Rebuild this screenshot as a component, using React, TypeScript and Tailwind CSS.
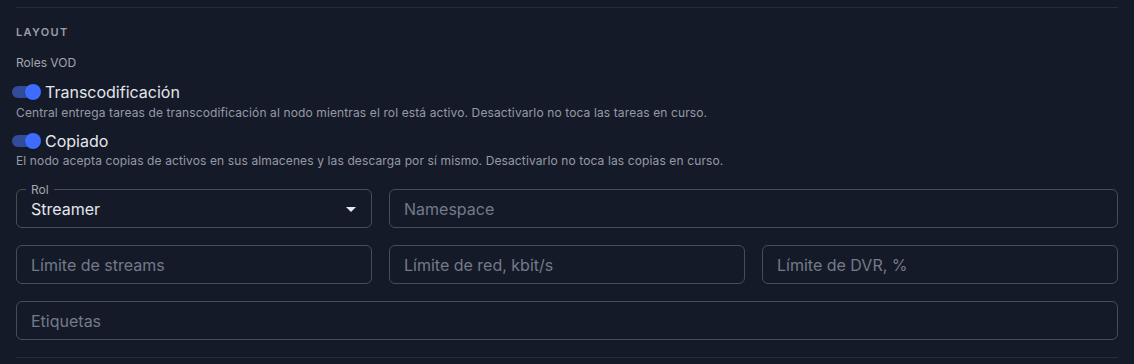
function Toggle({ label }: { label: string }) {
  return (
    <div className="flex items-center h-6">
      <div className="relative w-[34px] h-6 ml-[10px] mr-[1px] shrink-0">
        <span className="absolute left-[2px] top-[6px] w-[28px] h-[12px] rounded-full bg-[#324c9c]" />
        <span className="absolute left-[15px] top-[4px] w-[16px] h-[16px] rounded-full bg-[#3d6cff] shadow" />
      </div>
      <span className="text-[16px] text-[#e4e6eb]">{label}</span>
    </div>
  )
}

function Field({ placeholder }: { placeholder: string }) {
  return (
    <div className="h-[39px] flex items-center pt-px px-[14px] rounded-md border border-[#474c59] text-[16px] text-[#737a89]">
      {placeholder}
    </div>
  )
}

export default function App() {
  return (
    <div className="w-[1134px] h-[364px] bg-[#151a28] overflow-hidden" style={{ fontFamily: 'Inter, "Noto Sans", sans-serif' }}>
      <div className="mx-4 pt-[7px] flex flex-col">
        <div className="h-px bg-[#272c3a]" />

        <div className="mt-4 leading-4 text-[11px] font-semibold tracking-[0.12em] text-[#9a9fab]">LAYOUT</div>
        <div className="mt-[15px] leading-4 text-[12px] text-[#a3a7b1]">Roles VOD</div>

        <div className="mt-[9px] -ml-4">
          <Toggle label="Transcodificación" />
        </div>
        <p className="mt-px leading-4 text-[12px] tracking-[0.01em] text-[#959aa6]">
          Central entrega tareas de transcodificación al nodo mientras el rol está activo. Desactivarlo no toca las tareas en curso.
        </p>

        <div className="mt-2 -ml-4">
          <Toggle label="Copiado" />
        </div>
        <p className="leading-4 text-[12px] tracking-[0.01em] text-[#959aa6]">
          El nodo acepta copias de activos en sus almacenes y las descarga por sí mismo. Desactivarlo no toca las copias en curso.
        </p>

        <div className="mt-[20px] flex flex-col gap-[17px]">
          <div className="grid grid-cols-[356px_1fr] gap-[17px]">
            <div className="relative h-[39px] flex items-center pt-px px-[14px] rounded-md border border-[#474c59] text-[16px] text-[#e4e6eb]">
              <span className="absolute -top-[8px] left-[9px] px-[5px] bg-[#151a28] text-[12px] leading-4 text-[#a3a7b1]">Rol</span>
              <span className="flex-1">Streamer</span>
              <svg width="10" height="5" viewBox="0 0 10 5" className="mr-[1px]">
                <path d="M0 0h10L5 5z" fill="#e4e6eb" />
              </svg>
            </div>
            <Field placeholder="Namespace" />
          </div>
          <div className="grid grid-cols-3 gap-[17px]">
            <Field placeholder="Límite de streams" />
            <Field placeholder="Límite de red, kbit/s" />
            <Field placeholder="Límite de DVR, %" />
          </div>
          <Field placeholder="Etiquetas" />
        </div>

        <div className="mt-[17px] h-px bg-[#272c3a]" />
      </div>
    </div>
  )
}
